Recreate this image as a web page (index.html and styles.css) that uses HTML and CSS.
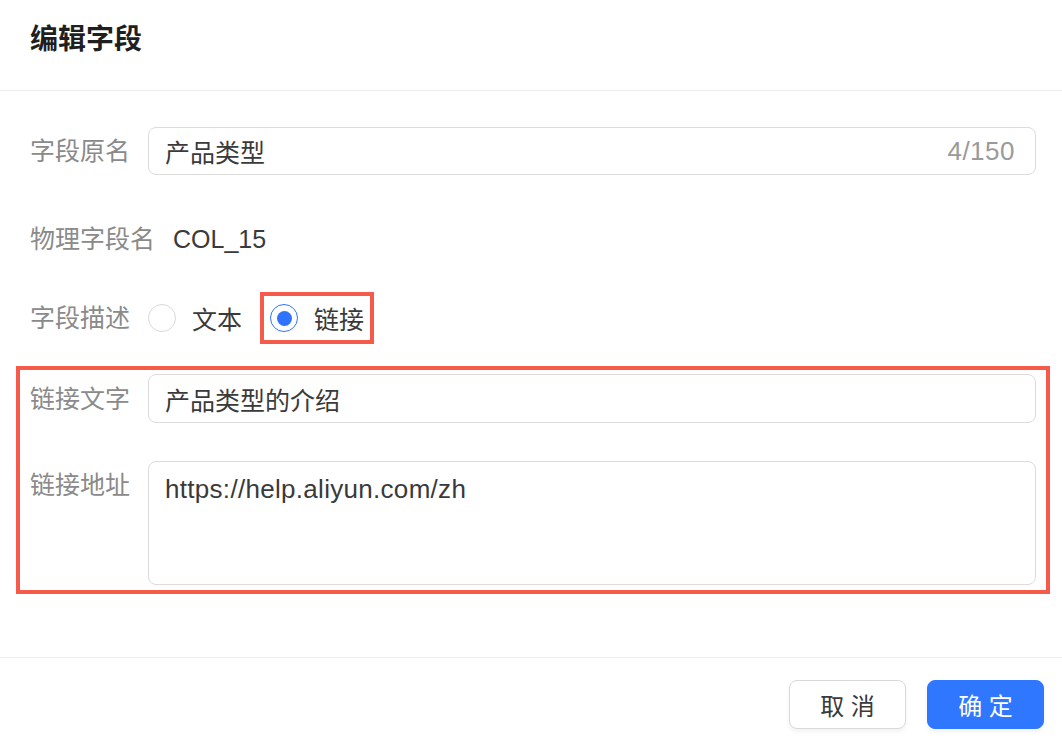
FILE: index.html
```html
<!DOCTYPE html>
<html lang="zh">
<head>
<meta charset="utf-8">
<title>编辑字段</title>
<link rel="stylesheet" href="styles.css">
</head>
<body>
<div class="dialog">
  <div class="dialog-header">
    <h1 class="dialog-title">编辑字段</h1>
  </div>
  <div class="dialog-body">
    <div class="form-row row-1">
      <div class="form-label">字段原名</div>
      <div class="form-control">
        <div class="input">
          <span class="input-value">产品类型</span>
          <span class="input-count">4/150</span>
        </div>
      </div>
    </div>
    <div class="form-row row-2">
      <div class="form-label label-auto">物理字段名</div>
      <div class="form-control">
        <span class="static-value">COL_15</span>
      </div>
    </div>
    <div class="form-row row-3">
      <div class="form-label">字段描述</div>
      <div class="form-control radio-group">
        <label class="radio-option">
          <span class="radio"></span>
          <span class="radio-text">文本</span>
        </label>
        <label class="radio-option is-checked is-highlighted">
          <span class="radio"><span class="radio-dot"></span></span>
          <span class="radio-text">链接</span>
        </label>
      </div>
    </div>
    <div class="highlight-group">
      <div class="form-row row-4">
        <div class="form-label">链接文字</div>
        <div class="form-control">
          <div class="input input-tall">
            <span class="input-value">产品类型的介绍</span>
          </div>
        </div>
      </div>
      <div class="form-row row-5">
        <div class="form-label label-top">链接地址</div>
        <div class="form-control">
          <div class="textarea">https://help.aliyun.com/zh</div>
        </div>
      </div>
    </div>
  </div>
  <div class="dialog-footer">
    <button class="btn btn-default">取 消</button>
    <button class="btn btn-primary">确 定</button>
  </div>
</div>
</body>
</html>
```
FILE: styles.css
```css
* { box-sizing: border-box; }
html, body {
  margin: 0;
  padding: 0;
  background: #fff;
}
body {
  font-family: "Liberation Sans", "Noto Sans CJK SC", sans-serif;
  color: #333;
  width: 1062px;
  height: 752px;
  overflow: hidden;
}
.dialog {
  display: flex;
  flex-direction: column;
  height: 752px;
}
.dialog-header {
  height: 91px;
  padding: 20px 30px 0;
  border-bottom: 1px solid #ececec;
}
.dialog-title {
  margin: 0;
  font-size: 28px;
  line-height: 40px;
  font-weight: bold;
  color: #1f1f1f;
}
.dialog-body {
  flex: 1;
  padding: 36px 26px 0 30px;
}
.form-row {
  display: flex;
  align-items: center;
}
.form-label {
  width: 118px;
  flex: none;
  font-size: 25px;
  color: #8a8a8a;
  line-height: 36px;
  white-space: nowrap;
}
.label-auto {
  width: auto;
  margin-right: 18px;
}
.label-top {
  align-self: flex-start;
  margin-top: 6px;
}
.form-control {
  flex: 1;
  min-width: 0;
}
.row-1 { height: 48px; }
.row-2 { height: 48px; margin-top: 40px; }
.row-3 { height: 48px; margin-top: 31px; }
.row-5 { margin-top: 38px; }
.input {
  height: 48px;
  border: 1px solid #dcdcdc;
  border-radius: 8px;
  display: flex;
  align-items: center;
  justify-content: space-between;
  padding: 0 20px 0 16px;
}
.input-tall { height: 49px; }
.input-value {
  font-size: 25px;
  color: #3a3a3a;
}
.input-count {
  font-size: 26px;
  letter-spacing: 0.5px;
  color: #9a9a9a;
}
.static-value {
  font-size: 25px;
  color: #3a3a3a;
}
.textarea {
  height: 124px;
  border: 1px solid #dcdcdc;
  border-radius: 8px;
  padding: 9px 16px;
  font-size: 26px;
  letter-spacing: 0.3px;
  line-height: 36px;
  color: #3a3a3a;
}
.radio-group {
  display: flex;
  align-items: center;
}
.radio-option {
  display: flex;
  align-items: center;
  height: 32px;
}
.radio-option + .radio-option {
  margin-left: 28px;
}
.radio {
  width: 28px;
  height: 28px;
  border-radius: 50%;
  border: 1px solid #d9d9d9;
  display: flex;
  align-items: center;
  justify-content: center;
  flex: none;
}
.is-checked .radio {
  border-color: #2f74ff;
}
.radio-dot {
  width: 15px;
  height: 15px;
  border-radius: 50%;
  background: #2f74ff;
}
.radio-text {
  margin-left: 16px;
  font-size: 25px;
  color: #3a3a3a;
}
.is-highlighted {
  outline: 4px solid #f65a4b;
  outline-offset: 6px;
}
.highlight-group {
  margin: 24px -14px 0;
  border: 4px solid #f65a4b;
  padding: 4px 10px 5px;
}
.dialog-footer {
  height: 95px;
  border-top: 1px solid #ececec;
  display: flex;
  justify-content: flex-end;
  align-items: flex-start;
  padding: 22px 18px 0 0;
  gap: 21px;
}
.btn {
  width: 117px;
  height: 49px;
  border-radius: 8px;
  font-family: "Liberation Sans", "Noto Sans CJK SC", sans-serif;
  font-size: 24px;
  cursor: pointer;
  box-shadow: 0 3px 4px rgba(0, 0, 0, 0.05);
}
.btn-default {
  background: #fff;
  border: 1px solid #d9d9d9;
  color: #3a3a3a;
}
.btn-primary {
  background: #3077ff;
  border: 1px solid #3077ff;
  color: #fff;
}
```
